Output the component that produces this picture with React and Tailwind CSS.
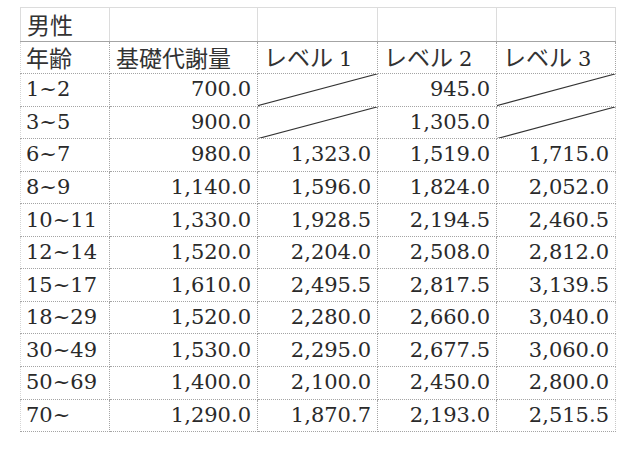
const rows = [
  ["1~2", "700.0", null, "945.0", null],
  ["3~5", "900.0", null, "1,305.0", null],
  ["6~7", "980.0", "1,323.0", "1,519.0", "1,715.0"],
  ["8~9", "1,140.0", "1,596.0", "1,824.0", "2,052.0"],
  ["10~11", "1,330.0", "1,928.5", "2,194.5", "2,460.5"],
  ["12~14", "1,520.0", "2,204.0", "2,508.0", "2,812.0"],
  ["15~17", "1,610.0", "2,495.5", "2,817.5", "3,139.5"],
  ["18~29", "1,520.0", "2,280.0", "2,660.0", "3,040.0"],
  ["30~49", "1,530.0", "2,295.0", "2,677.5", "3,060.0"],
  ["50~69", "1,400.0", "2,100.0", "2,450.0", "2,800.0"],
  ["70~", "1,290.0", "1,870.7", "2,193.0", "2,515.5"],
];

const jp = "font-['Noto_Sans_CJK_JP',sans-serif] text-[23px] text-[#333]";
const num = "font-['DejaVu_Serif','Liberation_Serif',serif] text-[21px]";
const cell = "border border-dotted border-[#a4a4a4] h-[32.55px] p-0 leading-none";

const Slash = () => (
  <svg className="absolute inset-0 w-full h-full" preserveAspectRatio="none" viewBox="0 0 100 100">
    <line x1="0" y1="100" x2="100" y2="0" stroke="#333" strokeWidth="1.2" vectorEffect="non-scaling-stroke" />
  </svg>
);

const Level = ({ n }) => (
  <span className="flex items-baseline pl-[6px]">
    <span className={jp}>レベル</span>
    <span className={num + " pl-[6px]"}>{n}</span>
  </span>
);

export default function App() {
  return (
    <div className="w-[631px] h-[449px] bg-white pt-[7px] pl-[20px] text-[#2a2a2a]">
      <table className="border-collapse table-fixed w-[595px]">
        <colgroup>
          <col className="w-[89px]" />
          <col className="w-[148px]" />
          <col className="w-[120px]" />
          <col className="w-[119px]" />
          <col className="w-[119px]" />
        </colgroup>
        <tbody>
          <tr>
            <td className={"border border-solid border-[#dcdcdc] border-b-dotted border-b-[#a4a4a4] h-[33.5px] p-0 pl-[6px] leading-none " + jp}>男性</td>
            {[0, 1, 2, 3].map((i) => (
              <td key={i} className="border border-solid border-[#dcdcdc] border-b-dotted border-b-[#a4a4a4] p-0" />
            ))}
          </tr>
          <tr>
            <td className={cell + " border-l-solid border-l-[#d6d6d6] pl-[5px] " + jp}>年齢</td>
            <td className={cell + " pl-[6px] " + jp}>基礎代謝量</td>
            <td className={cell}><Level n="1" /></td>
            <td className={cell}><Level n="2" /></td>
            <td className={cell}><Level n="3" /></td>
          </tr>
          {rows.map((r, i) => (
            <tr key={i}>
              <td className={cell + " border-l-solid border-l-[#d6d6d6] pl-[5px] " + num}>{r[0]}</td>
              {r.slice(1).map((v, j) => (
                <td key={j} className={cell + " relative text-right pr-[6px] " + num + (j === 3 ? " border-r-solid border-r-[#c8c8c8]" : "")}>
                  {v === null ? <Slash /> : v}
                </td>
              ))}
            </tr>
          ))}
        </tbody>
      </table>
    </div>
  );
}
